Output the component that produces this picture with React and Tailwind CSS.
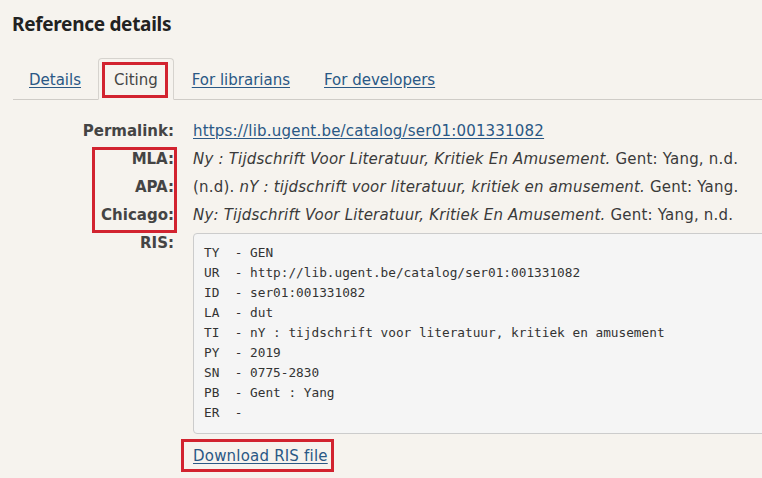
import React from "react";

const ris = [
  ["TY", "GEN"],
  ["UR", "http://lib.ugent.be/catalog/ser01:001331082"],
  ["ID", "ser01:001331082"],
  ["LA", "dut"],
  ["TI", "nY : tijdschrift voor literatuur, kritiek en amusement"],
  ["PY", "2019"],
  ["SN", "0775-2830"],
  ["PB", "Gent : Yang"],
  ["ER", ""],
];

const link = "text-[#2a5885] underline underline-offset-[2px]";

export default function App() {
  return (
    <div className="w-[762px] h-[478px] overflow-hidden bg-[#f6f3ee] text-[#3a3a3a] font-['DejaVu_Sans',sans-serif] text-[15px] leading-[20px]">
      <h1 className="pl-[12px] pt-[12px] h-[58px] text-[19px] leading-[24px] tracking-[-0.3px] font-bold text-[#222] font-['Noto_Sans',sans-serif]">
        Reference details
      </h1>
      <ul className="ml-[13px] flex border-b border-[#cfccc7]">
        <li className="mr-[1px] -mb-px">
          <a className={`block px-[15px] pt-[11px] pb-[9px] border border-transparent ${link}`}>Details</a>
        </li>
        <li className="mr-[2px] -mb-px">
          <a className="relative block px-[15px] pt-[11px] pb-[9px] border border-[#d6d3ce] border-b-transparent rounded-t-[4px] bg-[#f6f3ee] text-[#444]">
            Citing
            <span className="absolute left-[3px] top-[3px] w-[66px] h-[36px] border-[3px] border-[#d2232f]"></span>
          </a>
        </li>
        <li className="mr-[2px] -mb-px">
          <a className={`block px-[15px] pt-[11px] pb-[9px] border border-transparent ${link}`}>For librarians</a>
        </li>
        <li className="mr-[2px] -mb-px">
          <a className={`block px-[15px] pt-[11px] pb-[9px] border border-transparent ${link}`}>For developers</a>
        </li>
      </ul>

      <div className="relative mt-[21px] grid grid-cols-[174px_1fr] gap-x-[19px] gap-y-[8px] tracking-[0.2px]">
        <div className="text-right font-bold text-[#444] tracking-normal">Permalink:</div>
        <div className="whitespace-nowrap">
          <a className={link}>https://lib.ugent.be/catalog/ser01:001331082</a>
        </div>

        <div className="text-right font-bold text-[#444] tracking-normal">MLA:</div>
        <div className="whitespace-nowrap">
          <i>Ny : Tijdschrift Voor Literatuur, Kritiek En Amusement.</i> Gent: Yang, n.d.
        </div>

        <div className="text-right font-bold text-[#444] tracking-normal">APA:</div>
        <div className="whitespace-nowrap">
          (n.d). <i>nY : tijdschrift voor literatuur, kritiek en amusement.</i> Gent: Yang.
        </div>

        <div className="text-right font-bold text-[#444] tracking-normal">Chicago:</div>
        <div className="whitespace-nowrap">
          <i>Ny: Tijdschrift Voor Literatuur, Kritiek En Amusement.</i> Gent: Yang, n.d.
        </div>

        <div className="text-right font-bold text-[#444] tracking-normal">RIS:</div>
        <div>
          <pre className="w-[620px] bg-[#f5f5f5] border border-[#cccccc] rounded-[4px] pt-[9px] pb-[10px] px-[10px] font-['DejaVu_Sans_Mono',monospace] text-[12.75px] leading-[20px] tracking-normal text-[#333]">
            {ris.map(([k, v]) => `${k}  - ${v}`).join("\n")}
          </pre>
          <div className="mt-[12px]">
            <a className={`relative ${link}`}>
              Download RIS file
              <span className="absolute left-[-12px] top-[-8px] w-[153px] h-[33px] border-[3px] border-[#d2232f]"></span>
            </a>
          </div>
        </div>

        <span className="absolute left-[92px] top-[26px] w-[85px] h-[86px] border-[3px] border-[#d2232f]"></span>
      </div>
    </div>
  );
}
